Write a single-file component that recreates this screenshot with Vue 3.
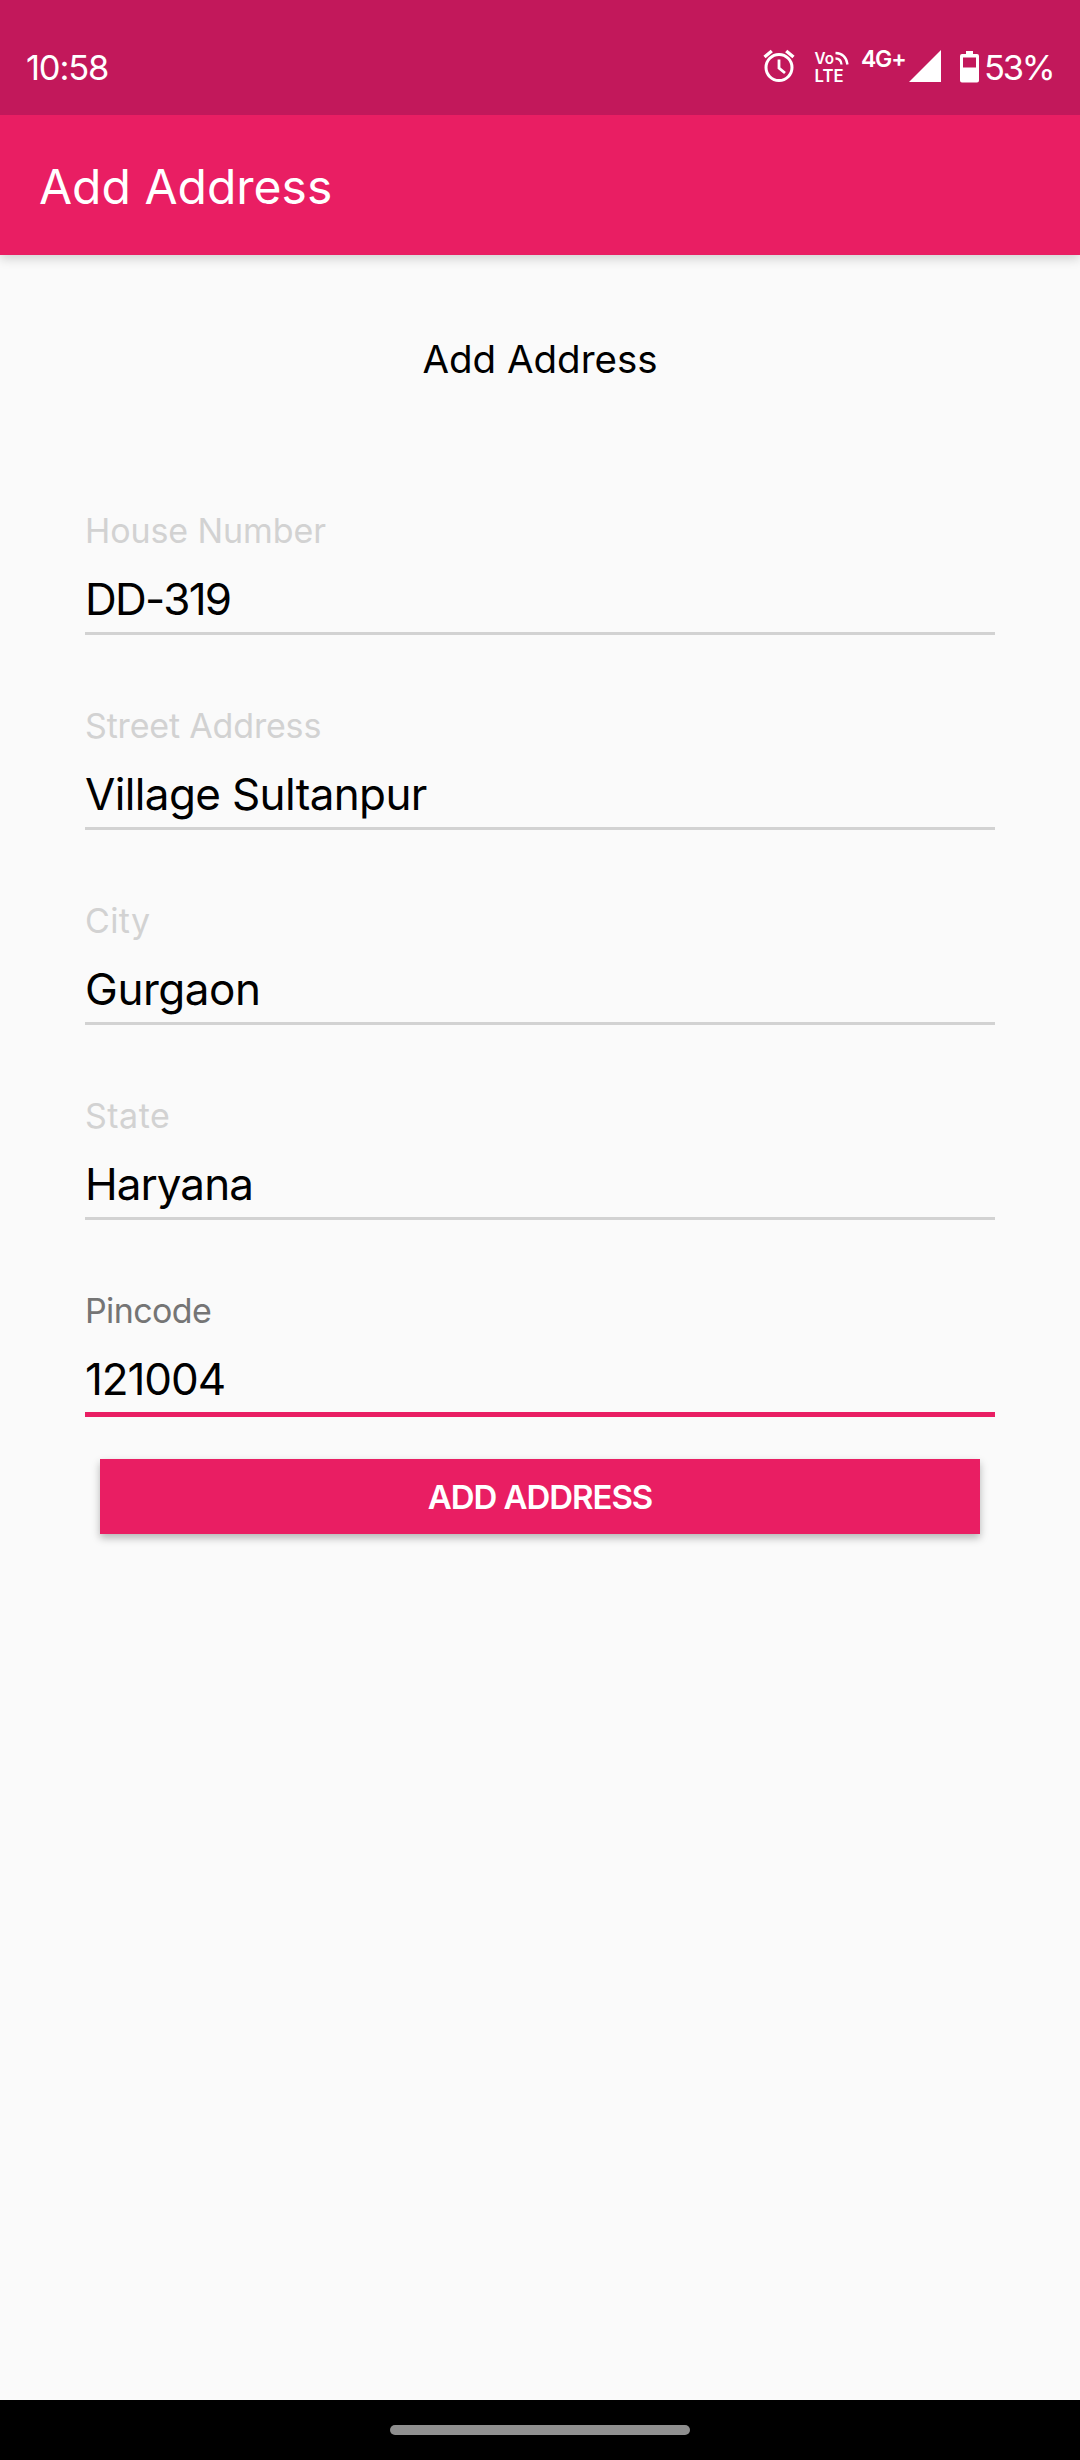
<script setup>
const fields = [
  { id: 'house', label: 'House Number', value: 'DD-319' },
  { id: 'street', label: 'Street Address', value: 'Village Sultanpur' },
  { id: 'city', label: 'City', value: 'Gurgaon' },
  { id: 'state', label: 'State', value: 'Haryana' },
  { id: 'pincode', label: 'Pincode', value: '121004', focused: true }
]
</script>

<template>
  <div class="screen">
    <div class="status">
      <span class="clock">10:58</span>
      <div class="indicators">
        <svg class="alarm" width="32" height="34" viewBox="0 0 32 34" fill="none" stroke="#fff">
          <circle cx="16" cy="18.5" r="13" stroke-width="3" />
          <path d="M1.5 8 8.8 2M30.5 8 23.2 2" stroke-width="3.4" />
          <path d="M16 10.5v8.5l6 5" stroke-width="2.8" />
        </svg>
        <svg class="volte" width="36" height="42" viewBox="0 -5 36 42">
          <g fill="#fff" font-family="Inter, sans-serif" font-weight="600">
            <text x="0.5" y="12.5" font-size="15.5" textLength="19.5" lengthAdjust="spacingAndGlyphs">Vo</text>
            <text x="0.500" y="30.5" font-size="17" textLength="29" lengthAdjust="spacingAndGlyphs">LTE</text>
          </g>
          <path d="M21.500 7.500q5.500 0 6 6M21.500 2q10.500 .5 12 11.500" fill="none" stroke="#fff" stroke-width="2.3" />
        </svg>
        <span class="network">4G+</span>
        <svg class="signal" width="32" height="32" viewBox="0 0 32 32"><path d="M32 0v32H0z" fill="#fff" /></svg>
        <svg class="battery" width="19" height="32" viewBox="0 0 19 32">
          <path fill="#fff" fill-rule="evenodd" d="M6 0h7v3h4q2 0 2 2v24.500q0 2-2 2H2q-2 0-2-2V5q0-2 2-2h4zM3 6.500v10h13v-10z" />
        </svg>
        <span class="percent">53%</span>
      </div>
    </div>
    <header class="appbar"><h1>Add Address</h1></header>
    <main class="content">
      <h2>Add Address</h2>
      <div v-for="f in fields" :key="f.id" class="field" :class="[f.id, { focused: f.focused }]">
        <label><span>{{ f.label }}</span></label>
        <div class="value"><span>{{ f.value }}</span></div>
        <div class="underline"></div>
      </div>
      <button type="button"><span>ADD ADDRESS</span></button>
    </main>
    <footer class="nav"><div class="pill"></div></footer>
  </div>
</template>

<style>
body { margin: 0; }
</style>

<style scoped>
.screen {
  width: 1080px;
  height: 2460px;
  display: flex;
  flex-direction: column;
  background: #fafafa;
  font-family: Inter, sans-serif;
  color: #000;
}
.status {
  position: relative;
  z-index: 1;
  height: 115px;
  flex: none;
  box-sizing: border-box;
  padding: 47px 29px 0 26px;
  display: flex;
  justify-content: space-between;
  background: #c2185b;
  color: #fff;
}
.clock, .percent { font-size: 34.5px; line-height: 41px; }
.clock { letter-spacing: -1.2px; }
.indicators { display: flex; align-items: flex-start; }
.alarm { margin: 2px 19px 0 0; }
.volte { margin: -1px 11px 0 0; }
.network {
  width: 42px;
  margin-right: 6px;
  font-size: 23px;
  line-height: 25px;
  font-weight: 600;
  letter-spacing: -1.200px;
  white-space: nowrap;
}
.signal { margin: 3px 19px 0 0; }
.battery { margin: 4px 5px 0 0; }
.percent { width: 67px; letter-spacing: -2.300px; white-space: nowrap; }
.appbar {
  height: 140px;
  flex: none;
  display: flex;
  align-items: center;
  padding: 3px 39px 0;
  box-sizing: border-box;
  background: #e91e63;
  color: #fff;
  box-shadow: 0 4px 10px rgba(0, 0, 0, 0.16);
}
h1, h2 { margin: 0; font-weight: 400; white-space: nowrap; }
h1 { font-size: 48px; line-height: 60px; }
.content { flex: 1; padding: 79px 85px 0; }
h2 { font-size: 38.500px; line-height: 50px; text-align: center; margin-bottom: 127px; }
.field { height: 195px; white-space: nowrap; }
label { display: block; font-size: 34px; line-height: 40px; color: #d2d2d2; }
.value { margin-top: 23px; font-size: 44px; line-height: 50px; }
.underline { margin-top: 8px; height: 2.500px; background: #d2d2d2; }
.house label { letter-spacing: -0.1px; }
.house .value { letter-spacing: -1.7px; }
.street label { letter-spacing: -0.17px; }
.street .value { letter-spacing: -0.63px; }
.city label { letter-spacing: 0.4px; }
.city .value { letter-spacing: -0.45px; }
.state label { letter-spacing: 0.5px; }
.state .value { letter-spacing: -0.95px; }
.pincode label { letter-spacing: -0.6px; }
.pincode .value { letter-spacing: -1.1px; }
.focused { height: 168px; }
.focused label { color: #757575; }
.focused .underline { height: 5px; background: #e91e63; }
button {
  display: block;
  width: 880px;
  height: 75px;
  margin: 0 auto;
  padding: 0;
  border: 0;
  background: #e91e63;
  color: #fff;
  font: 600 33px/40px Inter, sans-serif;
  letter-spacing: -1.05px;
  box-shadow: 0 4px 8px rgba(0, 0, 0, 0.28);
}
.nav {
  height: 60px;
  flex: none;
  display: flex;
  align-items: center;
  justify-content: center;
  background: #000;
}
.pill { width: 300px; height: 10px; border-radius: 5px; background: #8f8f8f; }
</style>
